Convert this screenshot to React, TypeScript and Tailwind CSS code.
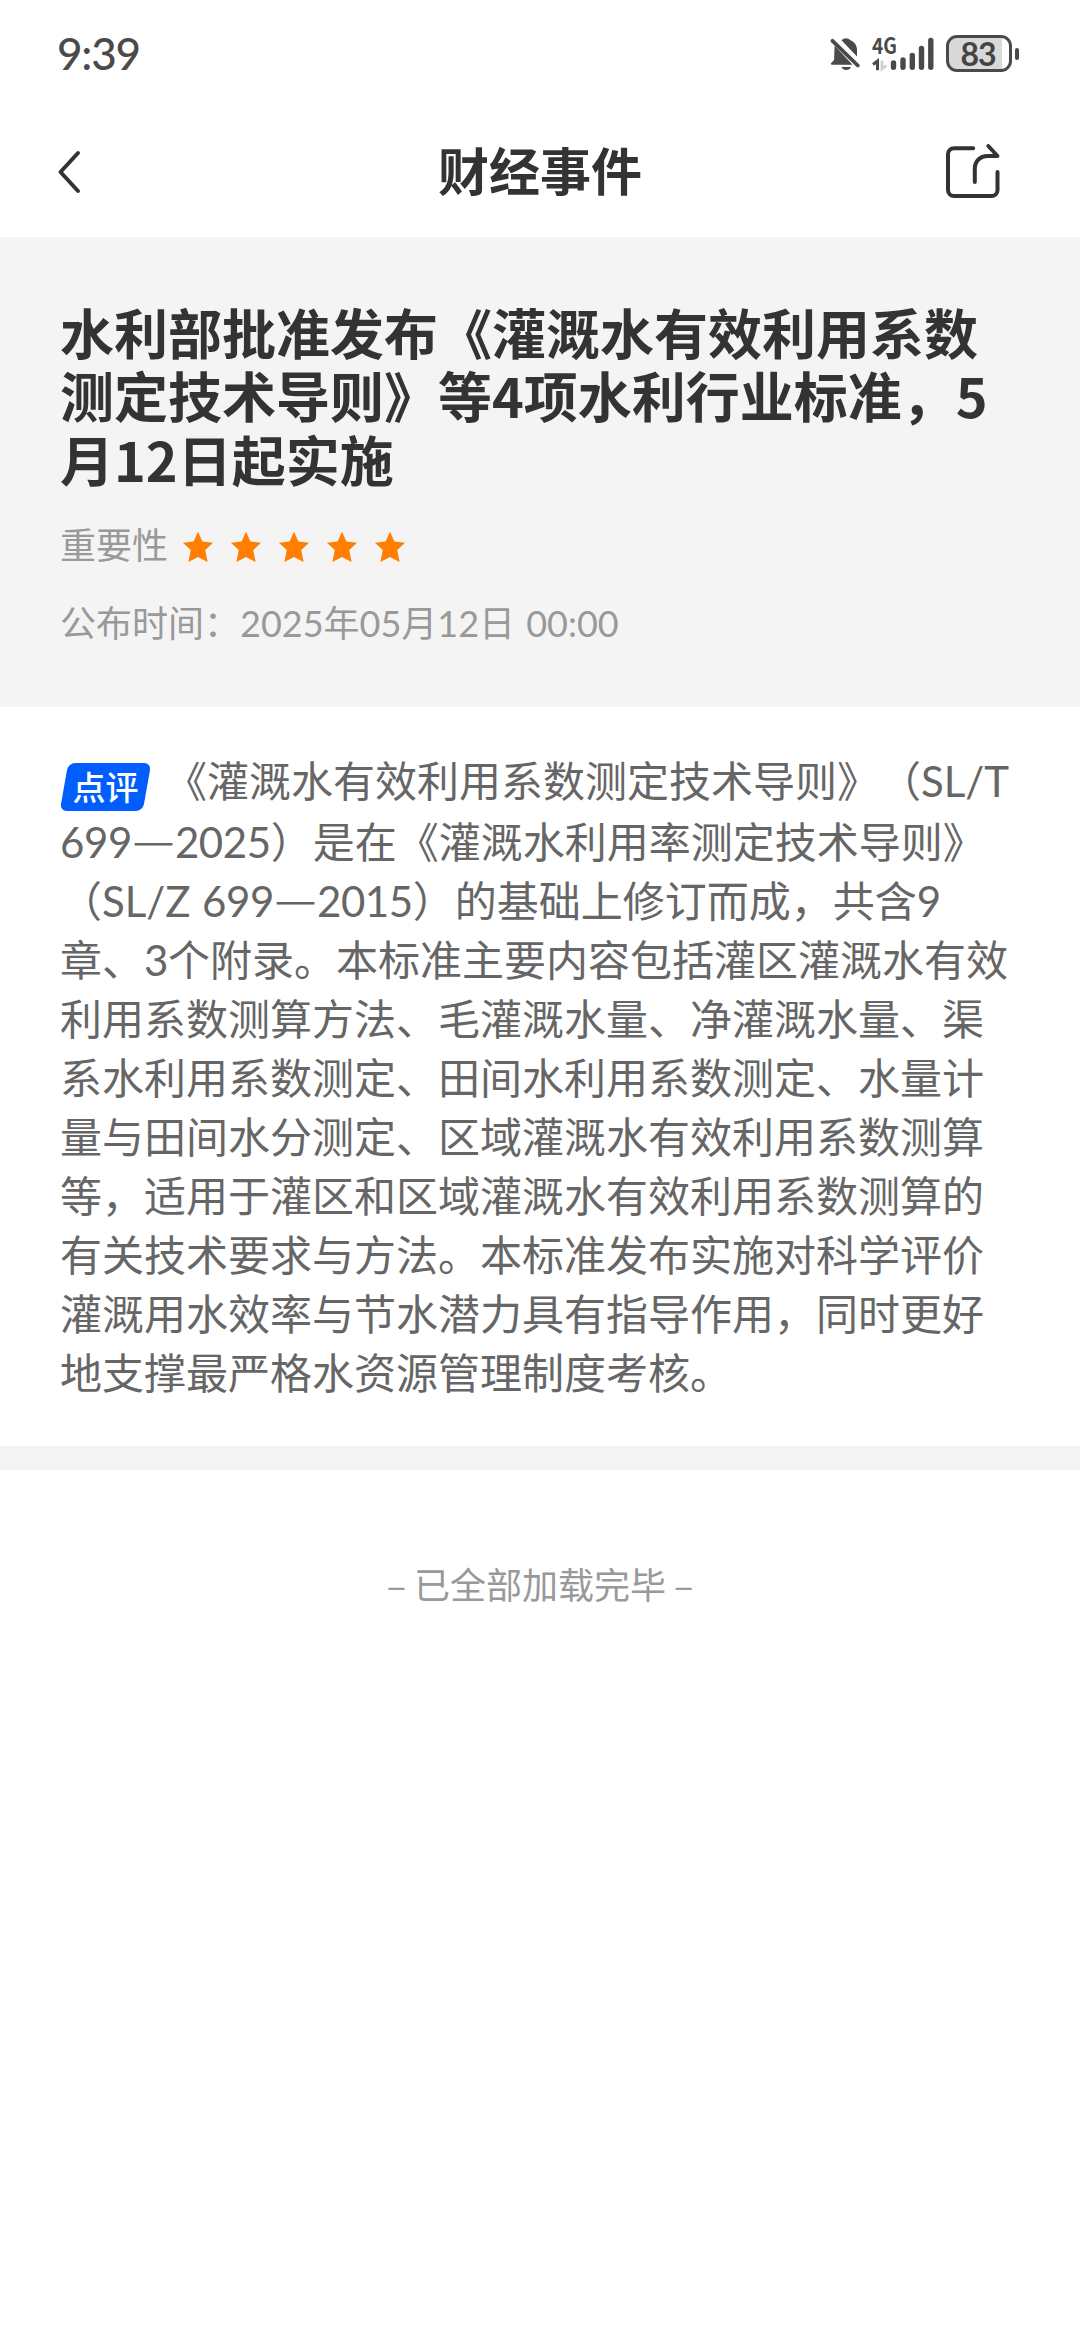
import React from 'react';

const titleLines: string[] = [
  '水利部批准发布《灌溉水有效利用系数',
  '测定技术导则》等4项水利行业标准，5',
  '月12日起实施',
];

const bodyLines: string[] = [
  '699—2025）是在《灌溉水利用率测定技术导则》',
  '（SL/Z 699—2015）的基础上修订而成，共含9',
  '章、3个附录。本标准主要内容包括灌区灌溉水有效',
  '利用系数测算方法、毛灌溉水量、净灌溉水量、渠',
  '系水利用系数测定、田间水利用系数测定、水量计',
  '量与田间水分测定、区域灌溉水有效利用系数测算',
  '等，适用于灌区和区域灌溉水有效利用系数测算的',
  '有关技术要求与方法。本标准发布实施对科学评价',
  '灌溉用水效率与节水潜力具有指导作用，同时更好',
  '地支撑最严格水资源管理制度考核。',
];

// Latin letters and digits get their own face, the rest stays in the CJK one
const Mixed: React.FC<{ text: string; digits?: string }> = ({ text, digits = '' }) => (
  <>
    {text.split(/([0-9]+|[A-Za-z/:]+|—)/).map((part, i) => {
      if (i % 2 === 0) return part;
      if (part === '—') {
        return (
          <span key={i} className="inline-block w-[43px] -translate-y-[2px] scale-x-[1.12] text-center">
            {part}
          </span>
        );
      }
      return (
        <span key={i} className={`font-['Lato'] ${/[0-9]/.test(part) ? digits : ''}`}>
          {part}
        </span>
      );
    })}
  </>
);

const BellOff: React.FC = () => (
  <svg width="32" height="36" viewBox="0 0 32 36" fill="#4a4a4a">
    <path d="M11.500 4.200a6 6 0 0 1 9 0C25 6.200 27 9.500 27 14v6.500z" />
    <path d="M4.600 9.500L22.500 28.800H1.800c-1 0-1.300-1-.6-1.700l2.900-3z" />
    <path d="M2.500 4.800L27.800 29.500" stroke="#4a4a4a" strokeWidth="3.800" strokeLinecap="round" />
    <path d="M7.500 4L29 25" stroke="#fff" strokeWidth="2.600" />
    <path d="M11.500 31h9.500a5 4.200 0 0 1-9.500 0z" />
  </svg>
);

const Signal: React.FC = () => (
  <svg width="64" height="36" viewBox="0 0 64 36" className="overflow-visible">
    <g stroke="#4a4a4a" strokeWidth="5.400" strokeLinecap="round">
      <path d="M21.500 27v4.300M31 24v7.300M40.300 19.500v11.800M49.500 12.500v18.800M58.800 4.500v26.800" />
    </g>
    <path d="M1 28.500l4.500-3.500v9.200" fill="none" stroke="#4a4a4a" strokeWidth="3" />
    <path d="M10 24.500v8.500l4.500-3.500" fill="none" stroke="#cfcfcf" strokeWidth="2.800" />
    <text x="0" y="17.500" fontSize="22" fontWeight="700" textLength="25" lengthAdjust="spacingAndGlyphs" fill="#4a4a4a" className="font-['Noto_Sans_CJK_SC',sans-serif]">
      4G
    </text>
  </svg>
);

const Battery: React.FC = () => (
  <div className="flex items-center gap-[3px]">
    <div className="flex h-[37px] w-[66px] items-center justify-center rounded-[11px] border-[3px] border-[#4a4a4a] bg-[linear-gradient(to_right,#d9d9d9_53px,#fff_53px)] pr-[2px] font-['Lato','Noto_Sans_CJK_SC',sans-serif] text-[32px] leading-[37px] font-bold tracking-[-1px] text-[#444]">
      83
    </div>
    <div className="h-[12px] w-[4px] rounded-full bg-[#4a4a4a]" />
  </div>
);

const ShareIcon: React.FC = () => (
  <svg width="56" height="60" viewBox="0 0 56 60" fill="none" stroke="#333" strokeWidth="4" strokeLinecap="round" strokeLinejoin="round">
    <path d="M28.200 6.200H9a6 6 0 0 0-6 6V48a6 6 0 0 0 6 6H46.500a6 6 0 0 0 6-6V30" />
    <path d="M29.800 40V27c0-8 5.500-13 12.500-13H52.500L43.300 4" />
  </svg>
);

const Star: React.FC = () => (
  <svg width="32" height="32" viewBox="0 0 32 32" fill="#ff7d00">
    <path d="M16 .8l4.400 9.700 10.700 1.200-7.900 7.300 2.400 11.900L16 25.900 6.400 30.900 8.800 19 .9 11.700l10.700-1.200z" />
  </svg>
);

export default function App() {
  return (
    <div className="flex h-[2340px] w-[1080px] flex-col overflow-hidden bg-white font-['Noto_Sans_CJK_SC',sans-serif] [text-spacing-trim:space-all]">
      <div className="flex h-[107px] items-center justify-between pr-[61px] pl-[57px] text-[#4a4a4a]">
        <span className="pb-[2px] font-['Lato','Noto_Sans_CJK_SC',sans-serif] text-[44px] font-medium tracking-[-1.2px]">9:39</span>
        <div className="flex items-center">
          <BellOff />
          <div className="w-[10px]" />
          <Signal />
          <div className="w-[10px]" />
          <Battery />
        </div>
      </div>

      <header className="flex h-[130px] items-center justify-between pr-[79px] pl-[57px]">
        <svg width="78" height="44" viewBox="0 0 78 44" fill="none" stroke="#333" strokeWidth="4" strokeLinecap="round" strokeLinejoin="round">
          <path d="M21 3L3.500 22 21 41" />
        </svg>
        <h1 className="pb-[6px] text-[51px] font-bold text-[#333]">财经事件</h1>
        <ShareIcon />
      </header>

      <section className="h-[470px] bg-[#f4f4f4] px-[60px] pt-[63px]">
        <h2 className="text-[54px] leading-[63.3px] font-bold whitespace-nowrap text-[#333]">
          {titleLines.map((line) => (
            <div key={line}>{line}</div>
          ))}
        </h2>
        <div className="mt-[30px] flex h-[54px] items-center text-[36px] text-[#999]">
          <span className="pb-[8px]">重要性</span>
          <div className="ml-[14px] flex gap-4">
            {[1, 2, 3, 4, 5].map((n) => (
              <Star key={n} />
            ))}
          </div>
        </div>
        <div className="mt-[20px] h-[54px] text-[36px] leading-[54px] [word-spacing:3px] text-[#999]">
          <Mixed text="公布时间：2025年05月12日 00:00" />
        </div>
      </section>

      <article className="h-[739px] px-[60px] pt-[42px] text-[42px] leading-[59px] whitespace-nowrap text-[#666]">
        <div className="flex h-[61px]">
          <span className="relative mt-[14px] flex h-[48px] w-[91px] items-center justify-center pb-[2px] text-[33px] font-medium text-white">
            <span className="absolute inset-x-[4px] inset-y-0 -skew-x-[10deg] rounded-[7px] bg-[#005eff]" />
            <span className="relative">点评</span>
          </span>
          <span className="ml-[14px]">
            <Mixed text="《灌溉水有效利用系数测定技术导则》（SL/T" />
          </span>
        </div>
        {bodyLines.map((line) => (
          <div key={line} className="h-[59px] [word-spacing:2px]">
            <Mixed text={line} digits="tracking-[-0.4px]" />
          </div>
        ))}
      </article>

      <div className="h-6 bg-[#f4f4f4]" />
      <p className="mt-[86px] text-center text-[36px] leading-[54px] text-[#999]">– 已全部加载完毕 –</p>
    </div>
  );
}
